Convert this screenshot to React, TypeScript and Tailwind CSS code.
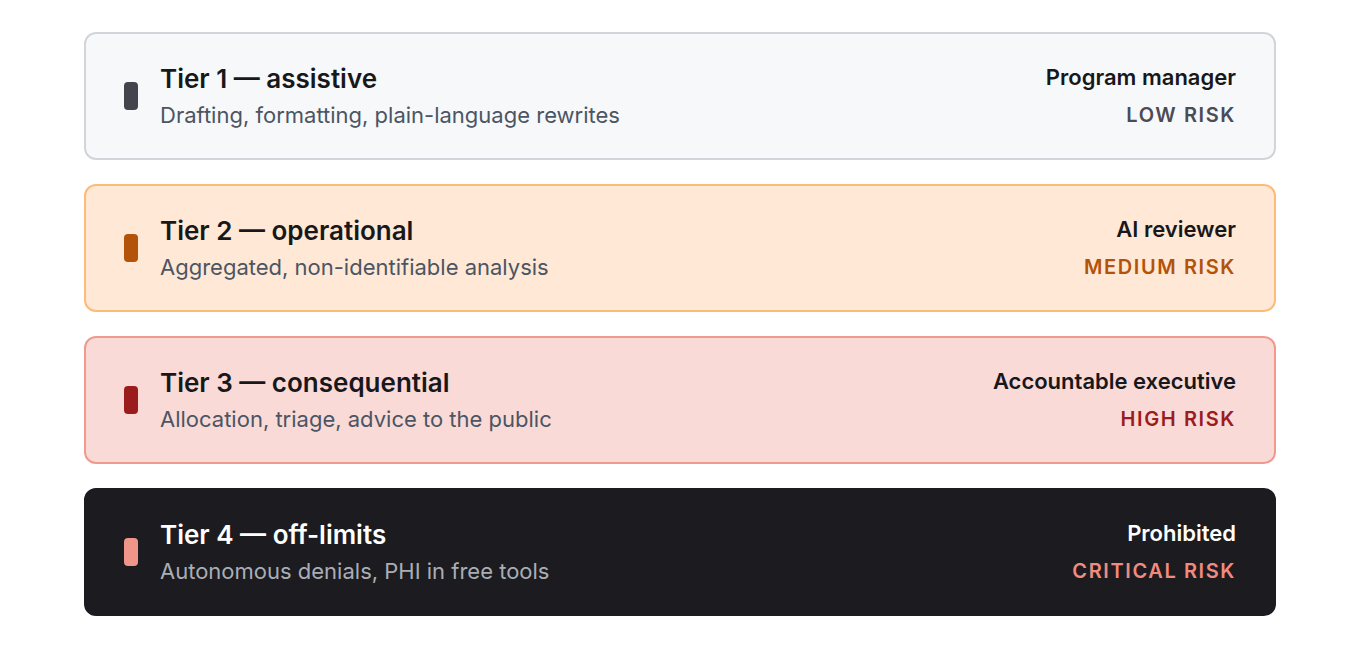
import React from "react";

interface Tier {
  title: string;
  desc: string;
  owner: string;
  risk: string;
  card: string;
  bar: string;
  titleColor: string;
  descColor: string;
  riskColor: string;
}

const tiers: Tier[] = [
  {
    title: "Tier 1 — assistive",
    desc: "Drafting, formatting, plain-language rewrites",
    owner: "Program manager",
    risk: "Low risk",
    card: "bg-[#f7f8fa] border-[#d1d5db]",
    bar: "bg-[#44444f]",
    titleColor: "text-[#18181b]",
    descColor: "text-[#4b5563]",
    riskColor: "text-[#4b4b55]",
  },
  {
    title: "Tier 2 — operational",
    desc: "Aggregated, non-identifiable analysis",
    owner: "AI reviewer",
    risk: "Medium risk",
    card: "bg-[#ffe8d5] border-[#fdbb78]",
    bar: "bg-[#b35309]",
    titleColor: "text-[#18181b]",
    descColor: "text-[#4b5563]",
    riskColor: "text-[#b35309]",
  },
  {
    title: "Tier 3 — consequential",
    desc: "Allocation, triage, advice to the public",
    owner: "Accountable executive",
    risk: "High risk",
    card: "bg-[#f9dad7] border-[#f09a8f]",
    bar: "bg-[#9b1c1c]",
    titleColor: "text-[#18181b]",
    descColor: "text-[#4b5563]",
    riskColor: "text-[#9b1c1c]",
  },
  {
    title: "Tier 4 — off-limits",
    desc: "Autonomous denials, PHI in free tools",
    owner: "Prohibited",
    risk: "Critical risk",
    card: "bg-[#1c1b20] border-[#1c1b20]",
    bar: "bg-[#f0958a]",
    titleColor: "text-white",
    descColor: "text-[#a9aeb5]",
    riskColor: "text-[#f08b7e]",
  },
];

export default function App() {
  return (
    <div
      className="min-h-screen bg-white px-[84px] pt-8"
      style={{ fontFamily: "Inter, 'Noto Sans', sans-serif" }}
    >
      <div className="flex flex-col gap-6">
        {tiers.map((t) => (
          <div
            key={t.title}
            className={`flex h-32 items-center justify-between rounded-xl border-2 px-[38px] ${t.card}`}
          >
            <div className="flex items-center gap-[22px]">
              <div className={`h-7 w-[14px] rounded-[4px] ${t.bar}`} />
              <div className="flex flex-col gap-[6px]">
                <div className={`text-[26px] font-semibold leading-8 ${t.titleColor}`}>{t.title}</div>
                <div className={`text-[22px] leading-7 ${t.descColor}`}>{t.desc}</div>
              </div>
            </div>
            <div className="flex flex-col items-end gap-[10px]">
              <div className={`text-[22px] font-semibold leading-7 ${t.titleColor}`}>{t.owner}</div>
              <div className={`text-[20px] font-semibold uppercase leading-7 tracking-[0.08em] ${t.riskColor}`}>
                {t.risk}
              </div>
            </div>
          </div>
        ))}
      </div>
    </div>
  );
}
